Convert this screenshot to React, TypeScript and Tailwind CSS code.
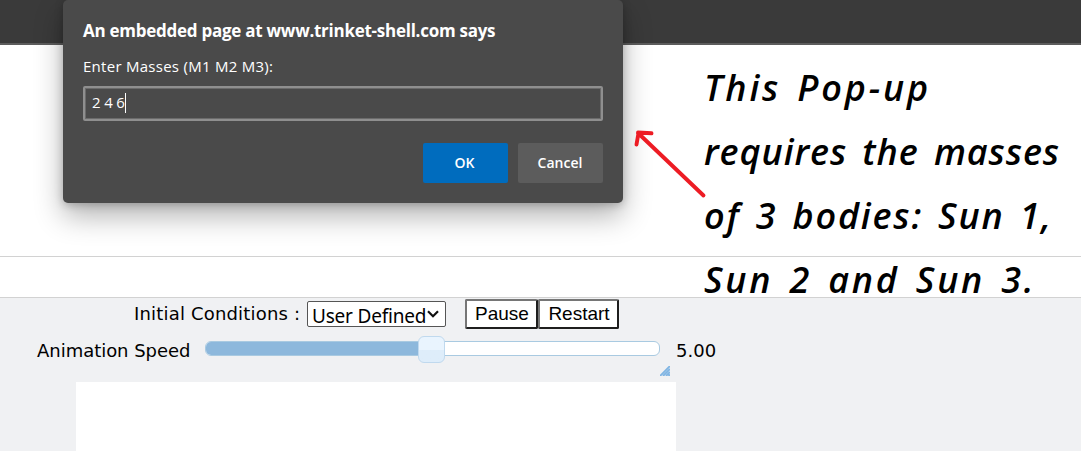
import React from "react";

const noteLines = [
  { text: "This Pop-up", style: "tracking-[2.8px] [word-spacing:4px]" },
  { text: "requires the masses", style: "tracking-[0.9px] [word-spacing:5px]" },
  { text: "of 3 bodies: Sun 1,", style: "tracking-[1.8px] [word-spacing:4px]" },
  { text: "Sun 2 and Sun 3.", style: "tracking-[2.7px] [word-spacing:4.2px]" },
];

function PromptDialog() {
  return (
    <div
      role="dialog"
      className="absolute left-[63px] top-0 flex h-[203px] w-[560px] flex-col rounded-[5px] bg-[#4a4a4a] px-5 pt-5 text-white shadow-[0_13px_29px_rgba(0,0,0,0.3),0_2px_8px_rgba(0,0,0,0.22)]"
      style={{ fontFamily: '"Open Sans", "Noto Sans", sans-serif' }}
    >
      <h1 className="h-[22px] whitespace-nowrap text-[17px] leading-[22px] font-bold tracking-[-0.26px]">
        An embedded page at www.trinket-shell.com says
      </h1>
      <label className="mt-[14px] h-5 whitespace-nowrap text-[15px] leading-5 tracking-[0.27px]">
        Enter Masses (M1 M2 M3):
      </label>
      <div className="mt-[10px] flex h-[35px] w-[520px] items-center rounded-[2px] border-2 border-[#8f8f8f] pl-[7px] text-[15px] shadow-[inset_0_0_0_1px_#6b6b6b]">
        <span className="-mt-0.5 tracking-[-0.4px] [word-spacing:0.5px]">2 4 6</span>
        <span className="-mt-0.5 h-5 w-px bg-white" />
      </div>
      <div className="mt-[22px] flex justify-end gap-[10px] text-[14px] font-semibold">
        <button className="h-10 w-[85px] rounded-[2px] bg-[#006cbe] pr-0.5 pb-0.5">OK</button>
        <button className="h-10 w-[85px] rounded-[2px] bg-[#5c5c5c] pr-px pb-0.5">Cancel</button>
      </div>
    </div>
  );
}

function Annotation() {
  return (
    <div
      className="absolute left-[704px] top-[56px] text-[36px] leading-[64px] font-semibold text-black italic"
      style={{ fontFamily: '"Open Sans", "Noto Sans", sans-serif' }}
    >
      {noteLines.map((line) => (
        <p key={line.text} className={`h-16 whitespace-nowrap ${line.style}`}>
          {line.text}
        </p>
      ))}
    </div>
  );
}

function Controls() {
  return (
    <div className="flex-1 bg-[#f0f1f3] text-black" style={{ fontFamily: '"DejaVu Sans", sans-serif' }}>
      <div className="flex h-8 items-start pl-[134px]">
        <span className="w-[173px] whitespace-nowrap pt-[4px] text-[18px] leading-6 tracking-[0.18px]">
          Initial Conditions :
        </span>
        <div
          className="mt-[3px] flex h-[26px] w-[139px] items-start rounded-[2px] border border-[#555] bg-white pl-1"
          style={{ fontFamily: '"Noto Sans", sans-serif' }}
        >
          <span className="w-[115px] whitespace-nowrap pt-px text-[19px] leading-[26px] tracking-[-0.2px]">
            User Defined
          </span>
          <svg className="mt-[8px] h-2 w-3" viewBox="0 0 12 8" fill="none" stroke="#111" strokeWidth="2.2">
            <path d="M1 1.2 6 6.2 11 1.2" />
          </svg>
        </div>
        <div className="ml-[19px] mt-px flex text-[19px]" style={{ fontFamily: '"Liberation Sans", Arial, sans-serif' }}>
          <button className="h-[30px] w-[73px] rounded-[2px] border-2 border-t-[#767676] border-r-[#1e1e1e] border-b-[#1e1e1e] border-l-[#767676] bg-white pl-px leading-[26px]">
            Pause
          </button>
          <button className="h-[30px] w-[81px] rounded-[2px] border-2 border-t-[#767676] border-r-[#1e1e1e] border-b-[#1e1e1e] border-l-[#767676] bg-white pl-px leading-[26px]">
            Restart
          </button>
        </div>
      </div>
      <div className="flex h-[52px] items-start pl-[37px] text-[18px] leading-6">
        <span className="mt-[9px] w-[168px] whitespace-nowrap tracking-[-0.03px]">Animation Speed</span>
        <div className="mt-[11px] flex h-[15px] w-[455px] rounded-[6px] border border-[#a9cae1] bg-white">
          <div className="h-full w-[226px] rounded-l-[5px] bg-[#8db8dc]" />
          <div className="-ml-[14px] -mt-[6px] h-[27px] w-[27px] shrink-0 rounded-[6px] border border-[#c0d9ee] bg-linear-to-b from-[#e9f4fe] from-50% to-[#deedfa] to-50%" />
        </div>
        <span className="ml-[16px] mt-[9px]">5.00</span>
        <svg className="-ml-[56px] mt-[36px] h-[10px] w-[10px] shrink-0" viewBox="0 0 10 10" stroke="#80b5e3" strokeWidth="1.9">
          <path d="M0 10 10 0M3 10 10 3M6 10 10 6M8.5 10 10 8.5" />
        </svg>
      </div>
      <div className="ml-[76px] h-[69px] w-[600px] bg-white" />
    </div>
  );
}

export default function App() {
  return (
    <main className="relative flex h-[451px] w-[1081px] flex-col overflow-hidden bg-white">
      <header className="h-[45px] border-b-2 border-[#5c5c5c] bg-[#3a3a3a]" />
      <section className="h-[212px] border-b border-[#d2d2d2]" />
      <section className="h-[41px] border-b border-[#d2d2d2]" />
      <Controls />
      <PromptDialog />
      <Annotation />
      <svg
        className="absolute left-[630px] top-[126px] h-[75px] w-[80px]"
        viewBox="0 0 80 75"
        fill="none"
        stroke="#ed1c24"
        strokeWidth="3.9"
        strokeLinecap="round"
      >
        <path d="M73.5 69.5 8 7M21.5 7.3 8 6.5M6.5 18.5 8.5 7" />
      </svg>
    </main>
  );
}
